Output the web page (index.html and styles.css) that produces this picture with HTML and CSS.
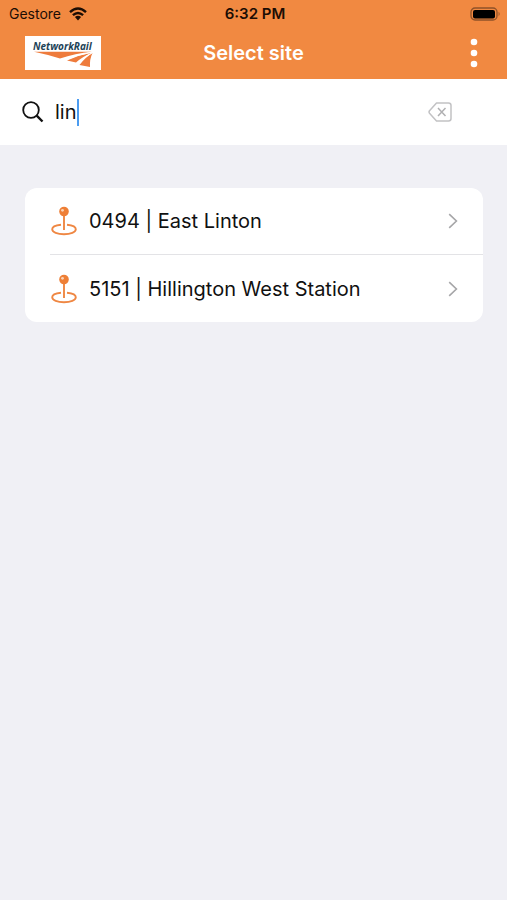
FILE: index.html
```html
<!DOCTYPE html>
<html lang="en">
<head>
    <meta charset="UTF-8">
    <meta name="viewport" content="width=device-width, initial-scale=1.0">
    <title>Select site</title>
    <link rel="stylesheet" href="styles.css">
</head>
<body>
    <header class="top">
        <div class="status">
            <div class="carrier">
                <span>Gestore</span>
                <svg width="18" height="14" viewBox="0 0 18 14" aria-hidden="true">
                    <path d="M1 5.200Q9-2.200 17 5.200M3.900 8.200Q9 3.600 14.100 8.200" fill="none" stroke="#1c0d04" stroke-width="2.400"/>
                    <path d="M5.900 10.100Q9 7.600 12.100 10.100L9 13.400z" fill="#1c0d04"/>
                </svg>
            </div>
            <time class="clock">6:32 PM</time>
            <svg class="battery" width="31" height="14" viewBox="0 0 31 14" aria-hidden="true">
                <rect x="1" y="1" width="26" height="12" rx="4" fill="none" stroke="#8f5229" stroke-width="1.300"/>
                <rect x="3" y="3" width="22" height="8.500" rx="2" fill="#000"/>
                <path d="M28.600 4.800q2 2.200 0 4.400z" fill="#8f5229"/>
            </svg>
        </div>
        <nav class="nav">
            <a href="#" class="logo" aria-label="Network Rail">
                <svg width="76" height="34" viewBox="0 0 76 34" aria-hidden="true">
                    <text x="8" y="14" class="logo_text">NetworkRail</text>
                    <g fill="#ee7b3c">
                        <path d="M9 15.800H67Q50 17.500 35 22.500Q22 18.500 9 15.800z"/>
                        <path d="M67 16.500Q54 19 42 24.500L51 26.500Q57 21 67 16.500z"/>
                        <path d="M67.500 17Q60 21.500 54.500 29L65 31Q64.500 23 67.500 17z"/>
                    </g>
                    <path d="M67 16.200Q52 18.500 39 24.500M67.500 16.500Q59 20.500 53 28" fill="none" stroke="#fff" stroke-width="1"/>
                </svg>
            </a>
            <h1>Select site</h1>
            <button type="button" class="more" aria-label="More options">
                <svg width="8" height="30" viewBox="0 0 8 30" fill="#fff" aria-hidden="true">
                    <circle cx="4" cy="4" r="3.300"/>
                    <circle cx="4" cy="15" r="3.300"/>
                    <circle cx="4" cy="26" r="3.300"/>
                </svg>
            </button>
        </nav>
    </header>

    <form class="search">
        <label for="site_search" aria-label="Search site">
            <svg width="22" height="22" viewBox="0 0 22 22" fill="none" stroke="#111" aria-hidden="true">
                <circle cx="9" cy="9" r="7.800" stroke-width="1.800"/>
                <path d="M14.700 14.700L20.500 20.500" stroke-width="2.400"/>
            </svg>
        </label>
        <div class="field">
            <input type="text" id="site_search" value="lin" autocomplete="off">
            <span class="caret"></span>
        </div>
        <button type="reset" class="clear" aria-label="Clear">
            <svg width="24" height="20" viewBox="0 0 24 20" fill="none" stroke="#c2c2c4" stroke-width="1.500" stroke-linejoin="round" aria-hidden="true">
                <path d="M8.500 1H20.500Q23 1 23 3.500V16.500Q23 19 20.500 19H8.500L1.500 11.200Q.600 10 1.500 8.800z"/>
                <path d="M10 6L17.500 14M17.500 6L10 14" stroke="#b0b0b2"/>
            </svg>
        </button>
    </form>

    <main>
        <ul class="sites">
            <li>
                <a href="#">
                    <svg width="26" height="30" viewBox="0 0 26 30" aria-hidden="true">
                        <path d="M10 18.800C5 19.300 1.200 21 1.200 23.300C1.200 26.200 6.500 28.300 13 28.300S24.800 26.200 24.800 23.300C24.800 21 21 19.300 16 18.800" fill="none" stroke="#ef8743" stroke-width="1.900"/>
                        <path d="M13 8V24" stroke="#ef8743" stroke-width="1.900"/>
                        <circle cx="13" cy="5.500" r="4.800" fill="#ee7f36"/>
                        <circle cx="11.500" cy="4.300" r="1.400" fill="#fbd3b5"/>
                    </svg>
                    <span class="name">0494 | East Linton</span>
                    <svg width="10" height="16" viewBox="0 0 10 16" aria-hidden="true">
                        <path d="M1.200 1.200L8.400 8L1.200 14.800" fill="none" stroke="#a6a6a8" stroke-width="1.600"/>
                    </svg>
                </a>
            </li>
            <li>
                <a href="#">
                    <svg width="26" height="30" viewBox="0 0 26 30" aria-hidden="true">
                        <path d="M10 18.800C5 19.300 1.200 21 1.200 23.300C1.200 26.200 6.500 28.300 13 28.300S24.800 26.200 24.800 23.300C24.800 21 21 19.300 16 18.800" fill="none" stroke="#ef8743" stroke-width="1.900"/>
                        <path d="M13 8V24" stroke="#ef8743" stroke-width="1.900"/>
                        <circle cx="13" cy="5.500" r="4.800" fill="#ee7f36"/>
                        <circle cx="11.500" cy="4.300" r="1.400" fill="#fbd3b5"/>
                    </svg>
                    <span class="name">5151 | Hillington West Station</span>
                    <svg width="10" height="16" viewBox="0 0 10 16" aria-hidden="true">
                        <path d="M1.200 1.200L8.400 8L1.200 14.800" fill="none" stroke="#a6a6a8" stroke-width="1.600"/>
                    </svg>
                </a>
            </li>
        </ul>
    </main>
</body>
</html>
```
FILE: styles.css
```css
* {
    margin: 0;
    padding: 0;
    box-sizing: border-box;
}
body {
    background: #f0f0f5;
    color: #111;
    font-family: Inter, "Liberation Sans", sans-serif;
}
svg {
    display: block;
    flex: none;
}
button {
    border: 0;
    background: none;
}
.top {
    background: #f18941;
}
.status {
    display: grid;
    grid-template-columns: 1fr auto 1fr;
    align-items: center;
    height: 27px;
    padding: 0 6px 0 9px;
    color: #1c0d04;
    font-size: 14px;
}
.carrier {
    display: flex;
    align-items: center;
    gap: 8px;
}
.clock {
    font-size: 15px;
    font-weight: 600;
}
.battery {
    justify-self: end;
}
.nav {
    display: grid;
    grid-template-columns: 1fr auto 1fr;
    align-items: center;
    height: 52px;
    padding: 0 25px;
}
.logo {
    justify-self: start;
    background: #fff;
}
.logo_text {
    fill: #1d4358;
    font-family: "Open Sans", sans-serif;
    font-size: 10px;
    font-style: italic;
    font-weight: 700;
}
h1 {
    color: #fff;
    font-size: 20px;
    font-weight: 600;
}
.more {
    justify-self: end;
    padding: 0 4px;
}
.search {
    display: flex;
    align-items: center;
    height: 66px;
    padding: 0 55px 0 22px;
    background: #fff;
}
.field {
    display: flex;
    align-items: center;
    flex: 1;
    margin-left: 11px;
}
.field input {
    field-sizing: content;
    border: 0;
    outline: none;
    background: none;
    color: #111;
    font: 20px Inter, "Liberation Sans", sans-serif;
}
.caret {
    width: 2px;
    height: 27px;
    background: #4c9cf0;
}
.sites {
    margin: 43px 24px 43px 25px;
    border-radius: 12px;
    background: #fff;
    list-style: none;
}
.sites li {
    padding-left: 25px;
}
.sites a {
    display: flex;
    align-items: center;
    gap: 12px;
    height: 67px;
    padding-right: 25px;
    padding-left: 1px;
    color: #111;
    font-size: 20px;
    text-decoration: none;
}
.sites li:first-child a {
    border-bottom: 1px solid #e3e3e6;
}
.name {
    flex: 1;
}
```
